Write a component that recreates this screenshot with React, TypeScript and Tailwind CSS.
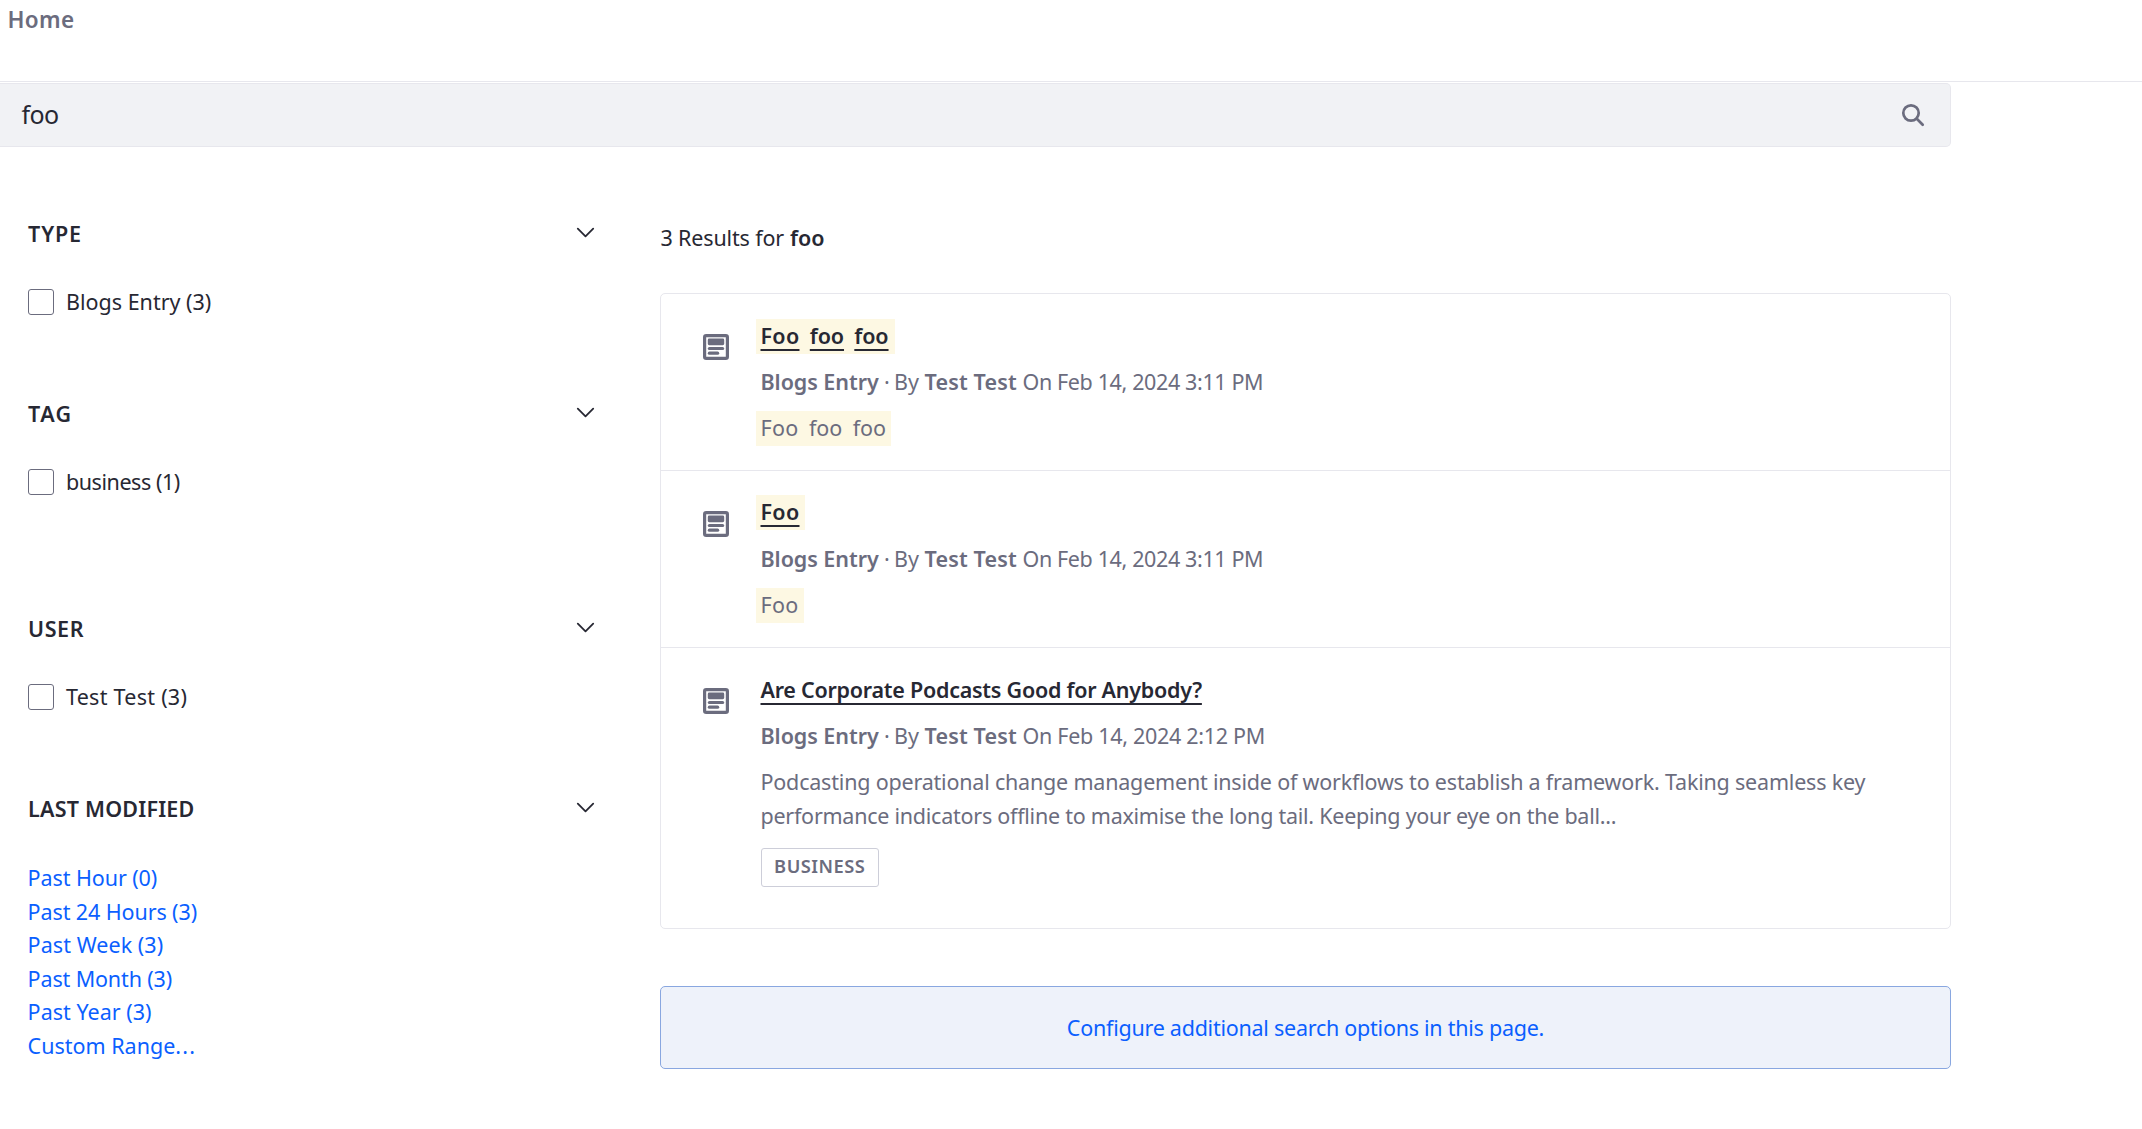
type Facet = { title: string; titleClass: string; item: string; itemClass: string; height: string };

const facets: Facet[] = [
  { title: "TYPE", titleClass: "tracking-[0.9px]", item: "Blogs Entry (3)", itemClass: "", height: "h-[180px]" },
  { title: "TAG", titleClass: "tracking-[1.4px]", item: "business (1)", itemClass: "tracking-[-0.45px]", height: "h-[215px]" },
  { title: "USER", titleClass: "tracking-[0.6px]", item: "Test Test (3)", itemClass: "tracking-[0.27px]", height: "h-[180px]" },
];

const ranges = [
  { label: "Past Hour (0)", cls: "tracking-[-0.08px]" },
  { label: "Past 24 Hours (3)", cls: "tracking-[-0.1px]" },
  { label: "Past Week (3)", cls: "tracking-[0.06px]" },
  { label: "Past Month (3)", cls: "tracking-[-0.14px]" },
  { label: "Past Year (3)", cls: "tracking-[0.02px]" },
];

function Chevron() {
  return (
    <svg className="-mt-[2px] h-[11px] w-[19px]" viewBox="0 0 19 11" fill="none" stroke="#272833" strokeWidth="1.8" strokeLinecap="round" strokeLinejoin="round">
      <path d="M1.8 1.6 9.5 9.3 17.2 1.6" />
    </svg>
  );
}

function BlogsIcon() {
  return (
    <svg className="mt-[40px] size-[26px] shrink-0" viewBox="0 0 26 26" fill="#6b6c7e">
      <path fillRule="evenodd" d="M3.2 0h19.6A3.2 3.2 0 0 1 26 3.2v19.6a3.2 3.2 0 0 1-3.2 3.2H3.2A3.2 3.2 0 0 1 0 22.8V3.2A3.2 3.2 0 0 1 3.2 0Zm0 3.2v19.6h19.6V3.2Z" />
      <rect x="4.8" y="4.6" width="16.4" height="6.6" rx="1.4" />
      <rect x="4.8" y="12.9" width="16.4" height="3.2" rx="1.6" />
      <rect x="4.8" y="17.6" width="11.4" height="3.2" rx="1.6" />
    </svg>
  );
}

function SearchIcon() {
  return (
    <svg className="size-[24px]" viewBox="0 0 24 24" fill="none" stroke="#6b6c7e" strokeWidth="2.7" strokeLinecap="round">
      <circle cx="10" cy="10" r="7.7" />
      <path d="M15.8 15.8 21.7 21.7" />
    </svg>
  );
}

function FacetHeader({ title, cls }: { title: string; cls: string }) {
  return (
    <div className="flex h-[34px] w-[567px] items-center justify-between">
      <h3 className={`pt-[2px] font-semibold ${cls}`}>{title}</h3>
      <Chevron />
    </div>
  );
}

function Meta({ time, cls }: { time: string; cls: string }) {
  return (
    <p className="flex whitespace-nowrap">
      <span className="flex w-[133.5px]">
        <b className="w-[123.5px] font-semibold tracking-[-0.05px]">Blogs Entry</b>·
      </span>
      <span className="w-[30.5px]">By</span>
      <b className="w-[98px] font-semibold tracking-[0.17px]">Test Test</b>
      <span className={cls}>On Feb 14, 2024 {time}</span>
    </p>
  );
}

const underline = "underline decoration-2 underline-offset-[5px] [text-decoration-skip-ink:none]";

function Highlighted({ words, strong, width }: { words: string[]; strong?: boolean; width: string }) {
  return (
    <span className={`-mb-px -ml-[5px] flex h-[35px] bg-[#fdf8e3] pl-[5px] leading-[34px] ${width} ${strong ? "gap-[10.3px] font-semibold text-[#272833]" : "gap-[10.5px]"}`}>
      {words.map((w, i) => (
        <span key={i} className={`${strong ? underline : ""} ${w === "Foo" ? "tracking-[0.3px]" : "tracking-[-0.1px]"}`}>{w}</span>
      ))}
    </span>
  );
}

export default function App() {
  return (
    <div className="h-[1129px] w-full overflow-hidden bg-white font-['Noto_Sans',sans-serif] text-[21.5px] leading-[34px] text-[#272833]">
      <header className="mb-px h-[82px] border-b border-[#e7e7ed] pl-[7.4px] pt-[3px] text-[22.5px] font-semibold tracking-[0.4px] text-[#6b6c7e]">Home</header>

      <div className="flex h-[64px] w-[1951px] items-center justify-between rounded-r-[5px] border border-l-0 border-[#e7e7ed] bg-[#f1f2f5] pl-[21.5px] pr-[25px]">
        <span className="pb-[2px] text-[25px] tracking-[-0.6px]">foo</span>
        <SearchIcon />
      </div>

      <div className="flex">
        <aside className="w-[660px] pl-[28px] pt-[69px]">
          {facets.map((f) => (
            <section key={f.title} className={f.height}>
              <FacetHeader title={f.title} cls={f.titleClass} />
              <label className="mt-[35px] flex items-center">
                <span className="mr-[12.5px] h-[26px] w-[25.5px] rounded-[3px] border border-[#6b6c7e] bg-white" />
                <span className={f.itemClass}>{f.item}</span>
              </label>
            </section>
          ))}
          <FacetHeader title="LAST MODIFIED" cls="tracking-[0.22px]" />
          <ul className="-ml-[0.4px] mt-[36px] leading-[33.6px] text-[#0b5fff]">
            {ranges.map((r) => (
              <li key={r.label} className={r.cls}>{r.label}</li>
            ))}
            <li>
              Custom Range<span className="tracking-[1.2px]">...</span>
            </li>
          </ul>
        </aside>

        <main className="w-[1291px] pt-[74px]">
          <p className="flex">
            <span className="w-[130px] pl-[0.5px] tracking-[-0.15px]">3 Results for</span>
            <b className="font-semibold">foo</b>
          </p>

          <div className="mt-[38px] h-[636px] rounded-[5px] border border-[#e7e7ed] text-[#6b6c7e]">
            <article className="flex h-[177px] gap-[31.5px] border-b border-[#e7e7ed] pl-[42px]">
              <BlogsIcon />
              <div className="flex flex-col gap-[12px] pt-[25px]">
                <Highlighted strong words={["Foo", "foo", "foo"]} width="w-[139.5px]" />
                <Meta time="3:11 PM" cls="tracking-[-0.37px]" />
                <Highlighted words={["Foo", "foo", "foo"]} width="w-[135.5px]" />
              </div>
            </article>
            <article className="flex h-[177px] gap-[31.5px] border-b border-[#e7e7ed] pl-[42px]">
              <BlogsIcon />
              <div className="flex flex-col gap-[12.5px] pt-[24px]">
                <Highlighted strong words={["Foo"]} width="w-[49.5px]" />
                <Meta time="3:11 PM" cls="tracking-[-0.37px]" />
                <Highlighted words={["Foo"]} width="w-[48.5px]" />
              </div>
            </article>
            <article className="flex gap-[31.5px] pl-[42px]">
              <BlogsIcon />
              <div className="flex flex-col items-start gap-[12px] pt-[25px]">
                <h2 className={`font-semibold tracking-[-0.25px] text-[#272833] ${underline}`}>Are Corporate Podcasts Good for Anybody?</h2>
                <Meta time="2:12 PM" cls="tracking-[-0.3px]" />
                <p className="whitespace-nowrap tracking-[-0.2px]">
                  Podcasting operational change management inside of workflows to establish a framework. Taking seamless key
                  <br />
                  <span className="tracking-[-0.25px]">performance indicators offline to maximise the long tail. Keeping your eye on the ball...</span>
                </p>
                <span className="mt-[3px] flex h-[39px] w-[118.5px] items-center justify-center rounded-[3px] border border-[#cdced9] pb-[3px] text-[18.3px] font-semibold leading-none tracking-[0.5px]">BUSINESS</span>
              </div>
            </article>
          </div>

          <div className="mt-[57px] flex h-[83px] items-center justify-center rounded-[5px] border border-[#89a7e0] bg-[#eef2fa]">
            <span className="tracking-[-0.25px] text-[#0b5fff]">Configure additional search options in this page.</span>
          </div>
        </main>
      </div>
    </div>
  );
}
